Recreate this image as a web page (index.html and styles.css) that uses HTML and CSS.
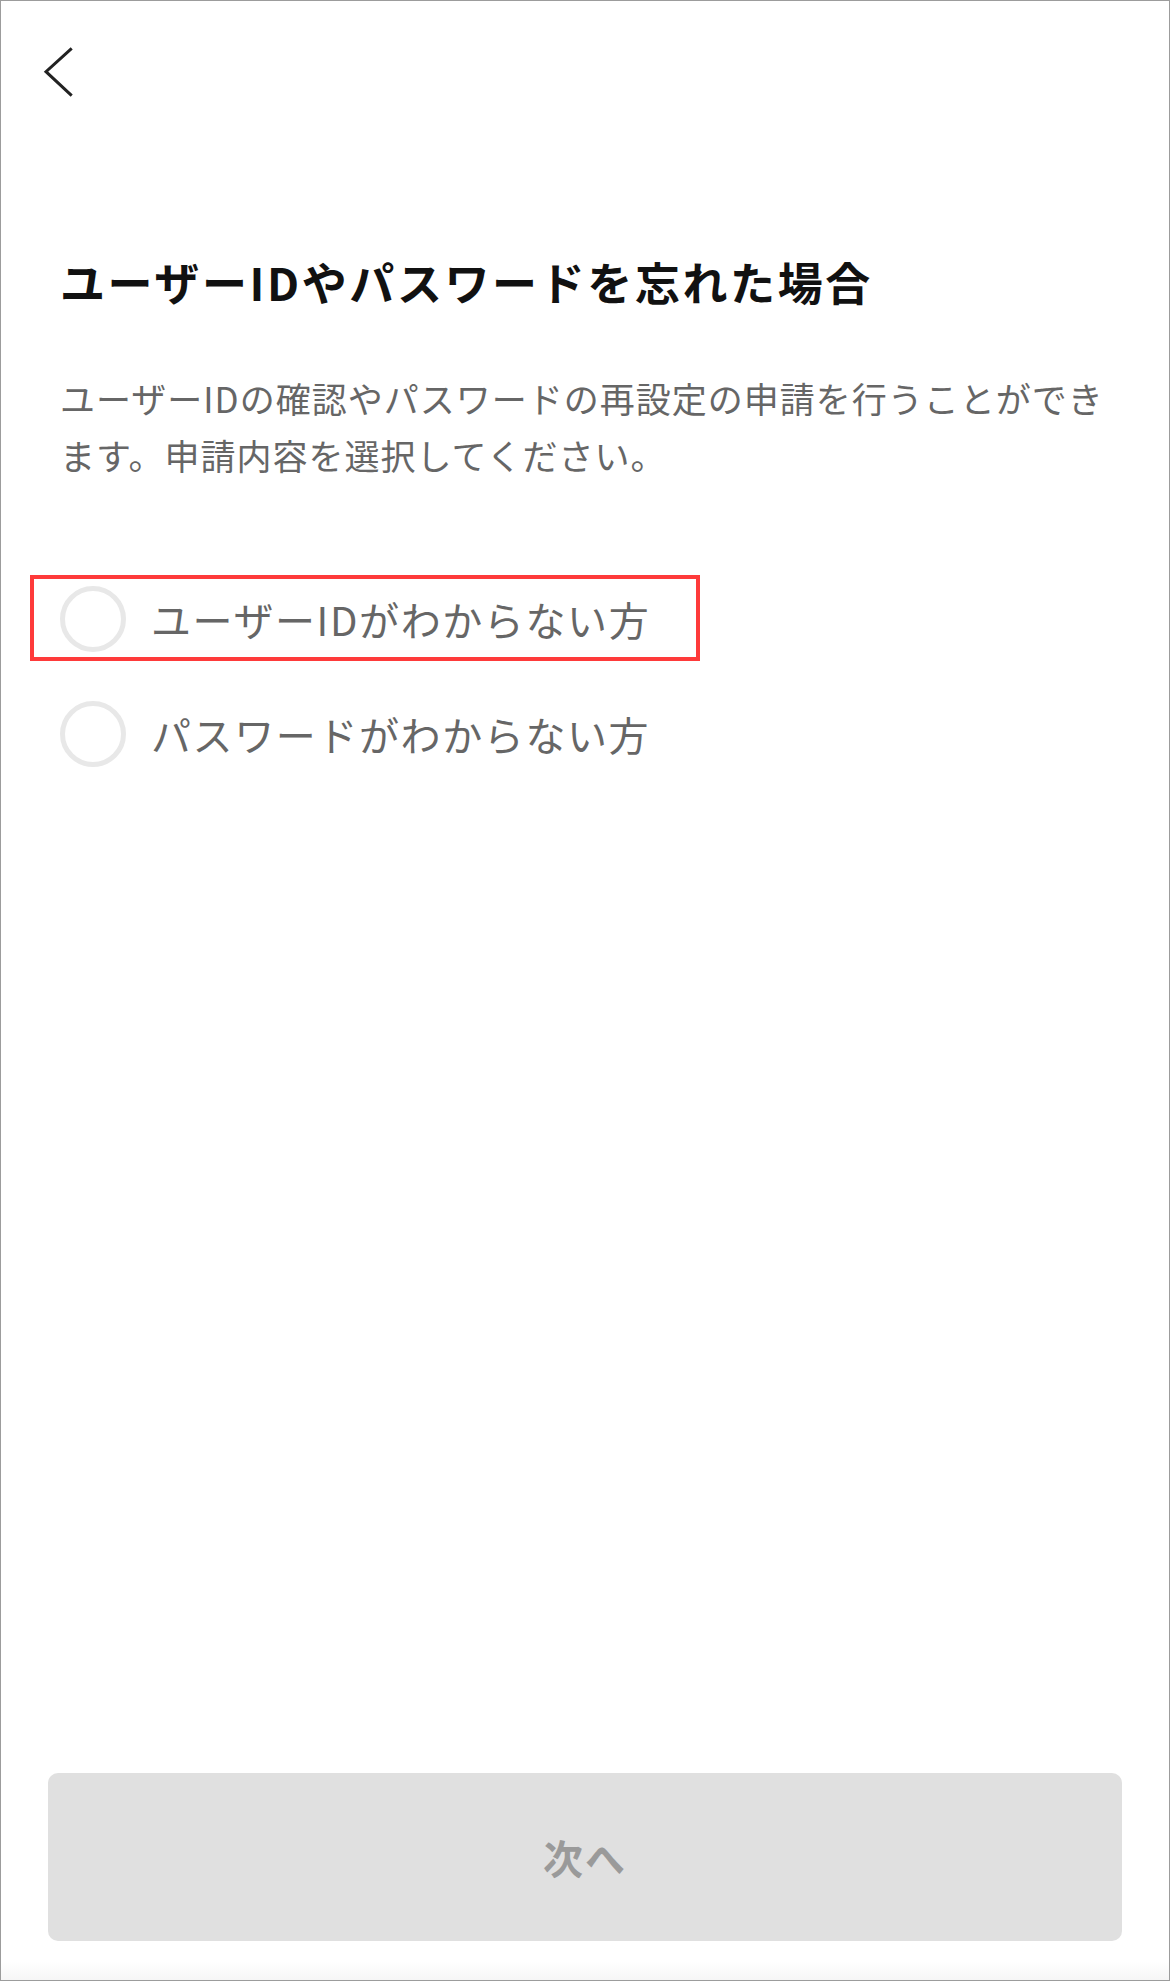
FILE: index.html
```html
<!DOCTYPE html>
<html lang="ja">
<head>
<meta charset="utf-8">
<title>ユーザーIDやパスワードを忘れた場合</title>
<link rel="stylesheet" href="styles.css">
</head>
<body>
<div class="screen">
  <header class="nav">
    <button class="back" type="button" aria-label="戻る">
      <svg width="32" height="52" viewBox="0 0 32 52" aria-hidden="true">
        <polyline points="28.7,2.3 3,25.7 28.7,49.7" fill="none" stroke="#222" stroke-width="3"/>
      </svg>
    </button>
  </header>
  <main class="content">
    <h1 class="title">ユーザーIDやパスワードを忘れた場合</h1>
    <p class="lead">ユーザーIDの確認やパスワードの再設定の申請を行うことができます。申請内容を選択してください。</p>
    <ul class="options">
      <li class="option">
        <span class="radio"></span>
        <span class="option-label">ユーザーIDがわからない方</span>
        <span class="highlight"></span>
      </li>
      <li class="option">
        <span class="radio"></span>
        <span class="option-label">パスワードがわからない方</span>
      </li>
    </ul>
  </main>
  <footer class="footer">
    <button class="next" type="button">次へ</button>
  </footer>
</div>
</body>
</html>
```

FILE: styles.css
```css
* { box-sizing: border-box; }
html, body { margin: 0; padding: 0; background: #fff; }
body {
  font-family: "Noto Sans CJK JP", "Noto Sans", sans-serif;
}
.screen {
  width: 1170px;
  height: 1981px;
  border: 1px solid #9c9c9c;
  display: flex;
  flex-direction: column;
  background: #fff;
}
.nav {
  padding: 45px 0 0 42px;
  height: 98px;
}
.back {
  border: 0;
  background: none;
  padding: 0;
  margin: 0;
  display: block;
  cursor: pointer;
}
.back svg { display: block; }
.content {
  flex: 1;
  padding: 0 48px 0 59px;
}
.title {
  margin: 150px 0 0;
  font-size: 45px;
  line-height: 66px;
  font-weight: 700;
  color: #111;
  letter-spacing: 2.6px;
}
.lead {
  margin: 54px 0 0;
  font-size: 35px;
  line-height: 57px;
  color: #666;
  font-weight: 400;
  letter-spacing: 1px;
}
.options {
  list-style: none;
  margin: 93px 0 0;
  padding: 0;
  display: flex;
  flex-direction: column;
  gap: 29px;
}
.option {
  position: relative;
  height: 86px;
  display: flex;
  align-items: center;
}
.radio {
  width: 66px;
  height: 66px;
  border: 5px solid #e8e8e8;
  border-radius: 50%;
  flex: none;
  margin-right: 25px;
}
.option-label {
  font-size: 40px;
  line-height: 1;
  color: #666;
  letter-spacing: 1.6px;
}
.highlight {
  position: absolute;
  left: -30px;
  top: -1px;
  width: 670px;
  height: 86px;
  border: 4px solid #fe3a3a;
}
.footer {
  padding: 0 47px 39px;
  background: linear-gradient(to bottom, #fff calc(100% - 18px), #f6f6f6);
}
.next {
  display: block;
  width: 100%;
  height: 168px;
  border: 0;
  border-radius: 10px;
  background: #e0e0e0;
  color: #9a9a9a;
  font-family: "Noto Sans CJK JP", "Noto Sans", sans-serif;
  font-size: 40px;
  font-weight: 700;
  letter-spacing: 2px;
  padding: 0;
}
```
